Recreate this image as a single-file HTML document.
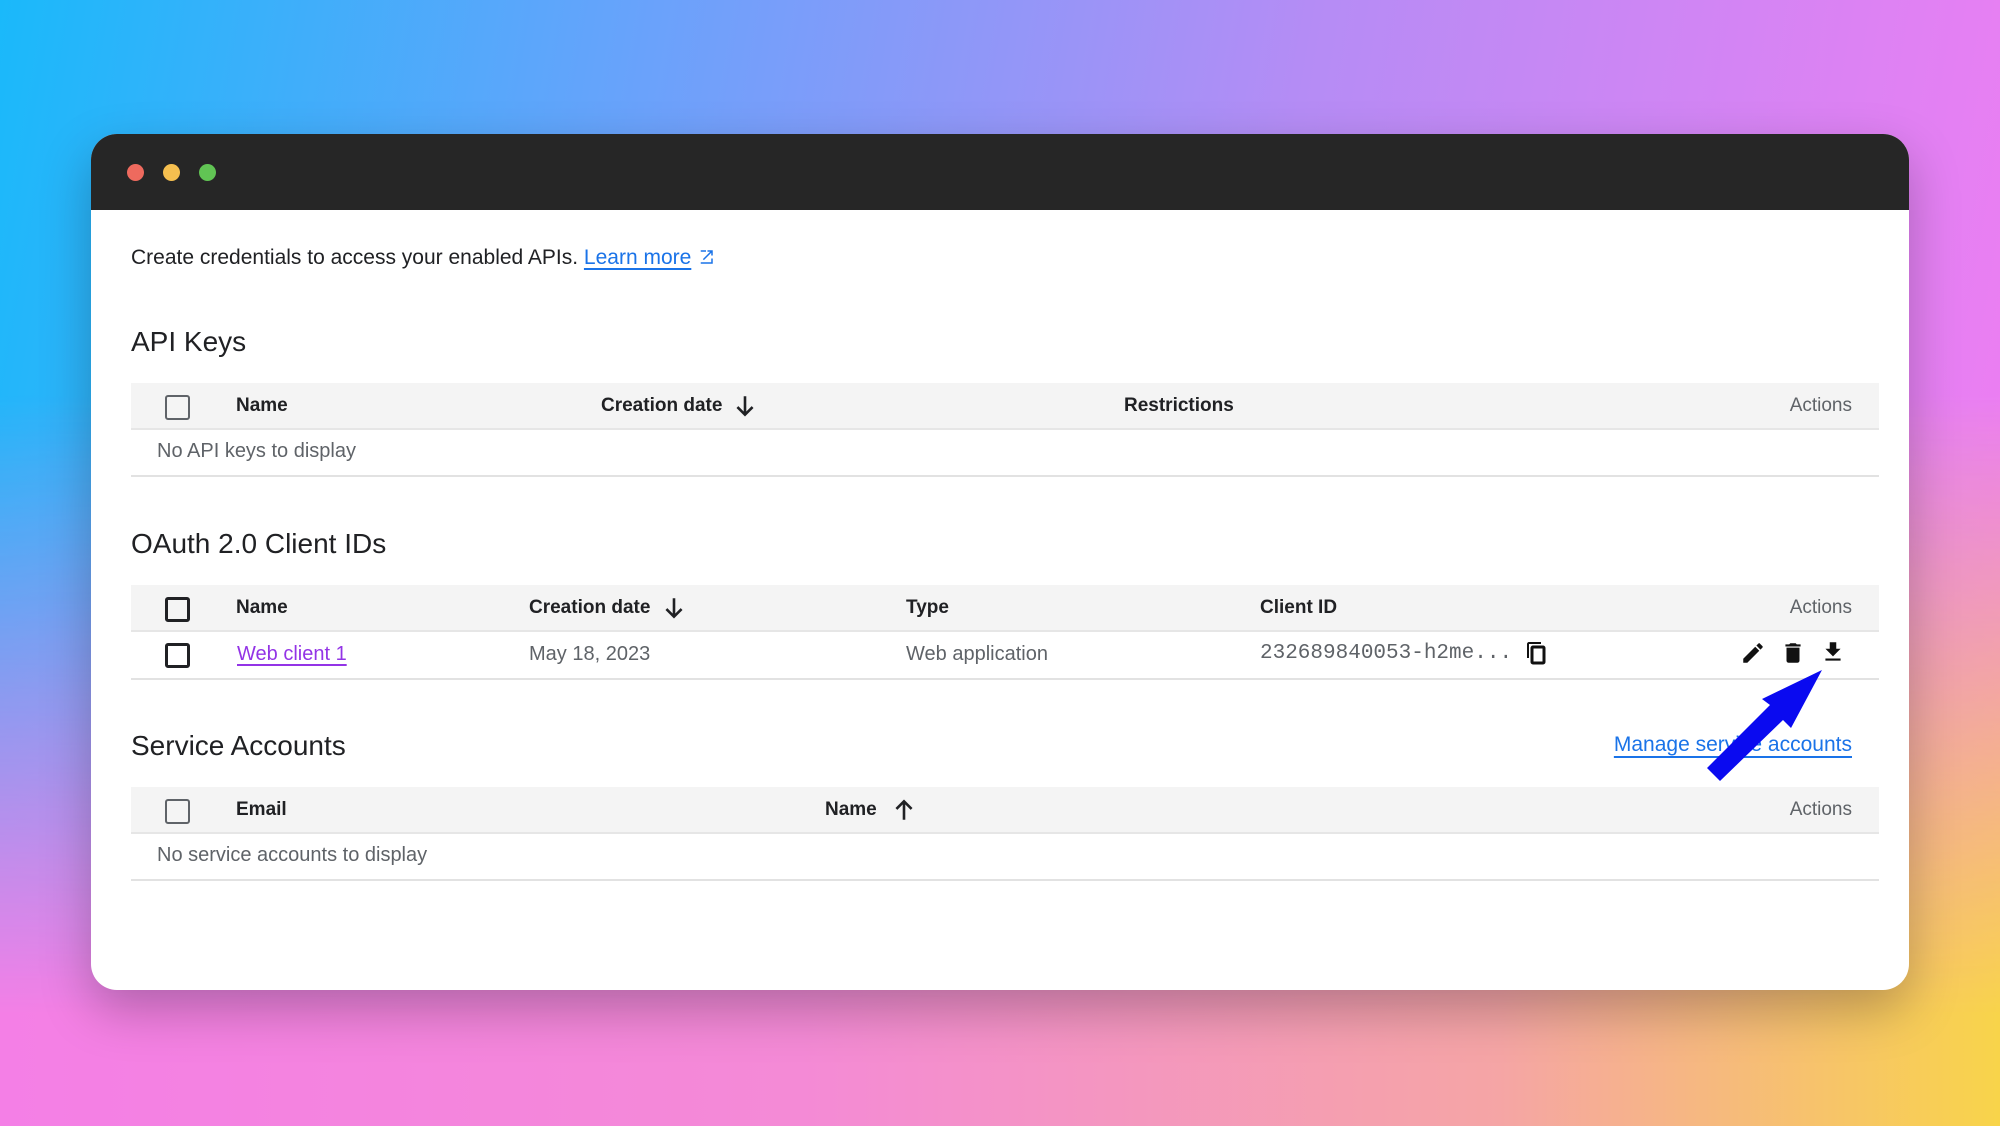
<!DOCTYPE html>
<html><head><meta charset="utf-8"><style>
*{margin:0;padding:0;box-sizing:border-box}
body{width:2000px;height:1126px;overflow:hidden;position:relative;font-family:"Liberation Sans",sans-serif;
background:linear-gradient(100deg,#1ab9fa 0%,#6aa2fb 30%,#b58cf5 60%,#f47cf2 100%);}
.bot{position:absolute;left:0;top:0;width:2000px;height:1126px;
background:linear-gradient(90deg,#f47fe6 0%,#f48ad6 40%,#f5a5a5 75%,#f8d44a 100%);
-webkit-mask-image:linear-gradient(to bottom,rgba(0,0,0,0) 35%,rgba(0,0,0,1) 90%);mask-image:linear-gradient(to bottom,rgba(0,0,0,0) 35%,rgba(0,0,0,1) 90%)}
.win{position:absolute;left:91px;top:134px;width:1818px;height:856px;background:#fff;border-radius:26px;overflow:hidden;box-shadow:0 20px 50px rgba(0,0,0,.25)}
.bar{height:76px;background:#262626;position:relative}
.dot{position:absolute;top:30px;width:17px;height:17px;border-radius:50%}
.t{position:absolute;white-space:nowrap}
.h2{font-size:28px;color:#202124}
.band{position:absolute;left:40px;width:1748px;background:#f4f4f4;border-bottom:2px solid #e6e6e6}
.line{position:absolute;left:40px;width:1748px;height:2px;background:#e2e2e2}
.th{font-size:19px;font-weight:bold;color:#202124}
.td{font-size:20px;color:#5f6368}
.cb{position:absolute;width:25px;height:25px;border:2.5px solid #5f6368;border-radius:3px}
.cb.b{border-color:#202124;border-width:3px}
.act{font-size:19px;color:#5f6368}
</style></head><body>
<div class="bot"></div>
<div class="win">
<div class="bar">
<div class="dot" style="left:36px;background:#ee6a5e"></div>
<div class="dot" style="left:72px;background:#f5bf4f"></div>
<div class="dot" style="left:108px;background:#61c454"></div>
</div>
<div class="t" style="left:40px;top:112px;font-size:21px;color:#202124">Create credentials to access your enabled APIs. <span style="color:#1a73e8;text-decoration:underline;text-underline-offset:4px">Learn more</span> <svg width="18" height="18" viewBox="0 0 24 24" style="vertical-align:-2px"><path d="M19 19H5V5h7V3H5v18h16v-7h-2zM14 3v2h3.6l-9.8 9.8 1.4 1.4L19 6.4V10h2V3z" fill="#1a73e8"/></svg></div>

<div class="t h2" style="left:40px;top:192px">API Keys</div>
<div class="band" style="top:249px;height:47px"></div>
<div class="cb" style="left:74px;top:261px"></div>
<div class="t th" style="left:145px;top:261px">Name</div>
<div class="t th" style="left:510px;top:261px">Creation date</div>
<svg class="t" style="left:641px;top:258px" width="26" height="28" viewBox="0 0 24 24"><path d="M12 3v17M5 13l7 7 7-7" stroke="#202124" stroke-width="2.4" fill="none"/></svg>
<div class="t th" style="left:1033px;top:261px">Restrictions</div>
<div class="t act" style="right:57px;top:261px">Actions</div>
<div class="t td" style="left:66px;top:306px">No API keys to display</div>
<div class="line" style="top:341px"></div>

<div class="t h2" style="left:40px;top:394px">OAuth 2.0 Client IDs</div>
<div class="band" style="top:451px;height:47px"></div>
<div class="cb b" style="left:74px;top:463px"></div>
<div class="t th" style="left:145px;top:463px">Name</div>
<div class="t th" style="left:438px;top:463px">Creation date</div>
<svg class="t" style="left:570px;top:460px" width="26" height="28" viewBox="0 0 24 24"><path d="M12 3v17M5 13l7 7 7-7" stroke="#202124" stroke-width="2.4" fill="none"/></svg>
<div class="t th" style="left:815px;top:463px">Type</div>
<div class="t th" style="left:1169px;top:463px">Client ID</div>
<div class="t act" style="right:57px;top:463px">Actions</div>
<div class="cb b" style="left:74px;top:509px"></div>
<div class="t td" style="left:146px;top:509px;color:#9334e6;text-decoration:underline;text-underline-offset:4px">Web client 1</div>
<div class="t td" style="left:438px;top:509px">May 18, 2023</div>
<div class="t td" style="left:815px;top:509px">Web application</div>
<div class="t td" style="left:1169px;top:508px;font-family:'Liberation Mono',monospace;font-size:21px">232689840053-h2me...</div>
<svg class="t" style="left:1434px;top:506px" width="24" height="26" viewBox="0 0 24 24"><path d="M16 1H4c-1.1 0-2 .9-2 2v14h2V3h12V1z" fill="#111"/><rect x="7" y="6" width="12" height="16" rx="1" fill="none" stroke="#111" stroke-width="3"/></svg>
<svg class="t" style="left:1649px;top:506px" width="26" height="26" viewBox="0 0 24 24"><path d="M3 17.25V21h3.75L17.81 9.94l-3.75-3.75L3 17.25zM20.71 7.04a1 1 0 0 0 0-1.41l-2.34-2.34a1 1 0 0 0-1.41 0l-1.83 1.83 3.75 3.75 1.83-1.83z" fill="#111"/></svg>
<svg class="t" style="left:1689px;top:506px" width="26" height="26" viewBox="0 0 24 24"><path d="M6 19c0 1.1.9 2 2 2h8c1.1 0 2-.9 2-2V7H6v12zM19 4h-3.5l-1-1h-5l-1 1H5v2h14V4z" fill="#111"/></svg>
<svg class="t" style="left:1729px;top:505px" width="26" height="26" viewBox="0 0 24 24"><path d="M19 9h-4V3H9v6H5l7 7 7-7zM5 18v2h14v-2H5z" fill="#111"/></svg>
<div class="line" style="top:544px"></div>

<div class="t h2" style="left:40px;top:596px">Service Accounts</div>
<div class="t" style="right:57px;top:599px;font-size:21px;color:#1a73e8;text-decoration:underline;text-underline-offset:5px">Manage service accounts</div>
<div class="band" style="top:653px;height:47px"></div>
<div class="cb" style="left:74px;top:665px"></div>
<div class="t th" style="left:145px;top:665px">Email</div>
<div class="t th" style="left:734px;top:665px">Name</div>
<svg class="t" style="left:800px;top:662px" width="26" height="28" viewBox="0 0 24 24"><path d="M12 21V4M5 11l7-7 7 7" stroke="#202124" stroke-width="2.4" fill="none"/></svg>
<div class="t act" style="right:57px;top:665px">Actions</div>
<div class="t td" style="left:66px;top:710px">No service accounts to display</div>
<div class="line" style="top:745px"></div>
</div>
<svg style="position:absolute;left:0;top:0" width="2000" height="1126"><path d="M1707 768 L1770 705 L1762 699 L1822 670 L1791 728 L1783 720 L1720 781 Z" fill="#0a0af0"/></svg>
</body></html>
